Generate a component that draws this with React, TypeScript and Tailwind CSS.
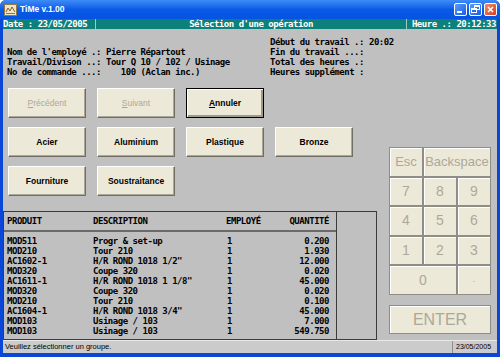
import { FC, ReactNode } from 'react'

const mono =
  "font-['DejaVu_Sans_Mono','Liberation_Mono',monospace] font-bold text-[9px] leading-[10px] tracking-[-0.47px] whitespace-pre"

const rows = [
  ['MOD511', 'Progr & set-up', '1', '0.200'],
  ['MOD210', 'Tour 210', '1', '1.930'],
  ['AC1602-1', 'H/R ROND 1018 1/2"', '1', '12.000'],
  ['MOD320', 'Coupe 320', '1', '0.020'],
  ['AC1611-1', 'H/R ROND 1018 1 1/8"', '1', '45.000'],
  ['MOD320', 'Coupe 320', '1', '0.020'],
  ['MOD210', 'Tour 210', '1', '0.100'],
  ['AC1604-1', 'H/R ROND 1018 3/4"', '1', '45.000'],
  ['MOD103', 'Usinage / 103', '1', '7.000'],
  ['MOD103', 'Usinage / 103', '1', '549.750'],
]

const Btn: FC<{ children: ReactNode; disabled?: boolean; def?: boolean }> = ({ children, disabled, def }) => {
  return (
    <div
      className={
        'w-[78px] h-[30px] bg-[#ece9d8] flex items-center justify-center font-["Liberation_Sans",Arial,sans-serif] font-bold text-[8.5px] ' +
        (def
          ? 'border border-black shadow-[inset_1px_1px_0_#ffffff,inset_-2px_-2px_0_#9d9b90] text-black'
          : 'border border-t-white border-l-white border-r-[#6f6d64] border-b-[#6f6d64] shadow-[inset_-1px_-1px_0_#aca899] ') +
        (disabled ? ' text-[#aca899] font-normal' : ' text-black')
      }
    >
      {children}
    </div>
  )
}

const Key: FC<{ children: ReactNode; className?: string }> = ({ children, className }) => {
  return (
    <div
      className={
        'flex items-center justify-center bg-[#ece9d8] border border-[#8f8d84] shadow-[inset_1px_1px_0_#ffffff] text-[#aca899] font-["Liberation_Sans",Arial,sans-serif] ' +
        (className ?? 'text-[14px]')
      }
    >
      {children}
    </div>
  )
}

export default function App() {
  return (
    <div className="w-[500px] h-[357px] bg-[#0a46d8] rounded-t-[6px] overflow-hidden flex flex-col">
      {/* Title bar */}
      <div className="h-[19px] flex items-center bg-gradient-to-b from-[#3d8cf6] via-[#0a5ae8] to-[#0553e0] pl-[4px] pr-[3px]">
        <svg width="13" height="12" viewBox="0 0 13 12" className="mr-[2px]">
          <rect x="0.5" y="0.5" width="12" height="11" fill="#efe6c6" stroke="#8c7a4a" />
          <path d="M2 8 L4 4 L6 7 L8 3 L11 8" stroke="#8a5a2a" strokeWidth="1" fill="none" />
          <rect x="2" y="9" width="9" height="1" fill="#6a8a4a" />
        </svg>
        <span className="text-white font-['Liberation_Sans',Arial,sans-serif] font-bold text-[8.5px] ml-[1px]">TiMe v.1.00</span>
        <div className="flex-1" />
        <div className="flex gap-[2px]">
          <div className="w-[13px] h-[13px] rounded-[2px] border border-white bg-gradient-to-br from-[#5a9cff] to-[#1a5ae8] flex items-end pl-[2px] pb-[2px]">
            <div className="w-[5px] h-[2px] bg-white" />
          </div>
          <div className="w-[13px] h-[13px] rounded-[2px] border border-white bg-gradient-to-br from-[#5a9cff] to-[#1a5ae8] relative">
            <div className="absolute left-[4px] top-[1px] w-[6px] h-[5px] border border-white border-t-2" />
            <div className="absolute left-[1px] top-[4px] w-[6px] h-[5px] border border-white border-t-2 bg-[#2a6af0]" />
          </div>
          <div className="w-[13px] h-[13px] rounded-[2px] border border-white bg-gradient-to-br from-[#f08a6a] to-[#d63c10] flex items-center justify-center">
            <svg width="7" height="7" viewBox="0 0 7 7">
              <path d="M1 1 L6 6 M6 1 L1 6" stroke="white" strokeWidth="1.5" />
            </svg>
          </div>
        </div>
      </div>

      <div className="mx-[3px] flex-1 flex flex-col bg-[#c0c0c0]">
        {/* Header bar */}
        <div className={'h-[10px] bg-[#0c807a] text-white flex ' + mono}>
          <div className="w-[92px]">Date : 23/05/2005</div>
          <div className="w-px bg-[#9fc9c6]" />
          <div className="flex-1 text-center">Sélection d'une opération</div>
          <div className="w-px bg-[#9fc9c6]" />
          <div className="w-[90px] text-right pr-px">Heure .: 20:12:33</div>
        </div>

        {/* Main */}
        <div className="h-[311px] flex flex-col">
          <div className={'flex pt-[8px] text-black ' + mono}>
            <div className="w-[267px] pl-[4px] mt-[10px]">
              <div>Nom de l'employé .: Pierre Répartout</div>
              <div>Travail/Divison ..: Tour Q 10 / 102 / Usinage</div>
              <div>No de commande ...:    100 (Aclan inc.)</div>
            </div>
            <div>
              <div>Début du travail .: 20:02</div>
              <div>Fin du travail ...:</div>
              <div>Total des heures .:</div>
              <div>Heures supplément :</div>
            </div>
          </div>

          <div className="flex mt-[11px]">
            <div className="w-[374px] flex flex-col">
              <div className="pl-[5px] grid grid-cols-[repeat(4,78px)] gap-x-[11px] gap-y-[9px]">
                <Btn disabled>
                  <span className="underline">P</span>récédent
                </Btn>
                <Btn disabled>
                  <span className="underline">S</span>uivant
                </Btn>
                <Btn def>
                  <span className="underline">A</span>nnuler
                </Btn>
                <div />
                <Btn>Acier</Btn>
                <Btn>Aluminium</Btn>
                <Btn>Plastique</Btn>
                <Btn>Bronze</Btn>
                <Btn>Fourniture</Btn>
                <Btn>Soustraitance</Btn>
              </div>

              {/* Table */}
              <div className="mt-[15px] h-[129px] border border-[#3c3c3c] flex">
                <div className={'w-[333px] border-r border-[#3c3c3c] text-black ' + mono}>
                  <div className="flex h-[20px] items-center border-b-2 border-[#6a6a6a]">
                    <div className="w-[89px] pl-[3px]">PRODUIT</div>
                    <div className="w-[133px]">DESCRIPTION</div>
                    <div className="w-[48px]">EMPLOYÉ</div>
                    <div className="w-[55px] text-right">QUANTITÉ</div>
                  </div>
                  <div className="pt-[4px]">
                    {rows.map((r, i) => (
                      <div key={i} className="flex h-[10px]">
                        <div className="w-[89px] pl-[3px]">{r[0]}</div>
                        <div className="w-[133px]">{r[1]}</div>
                        <div className="w-[48px] pl-[1px]">{r[2]}</div>
                        <div className="w-[55px] text-right">{r[3]}</div>
                      </div>
                    ))}
                  </div>
                </div>
              </div>
            </div>

            {/* Keypad */}
            <div className="ml-[12px] pt-[59px]">
              <div className="w-[102px] h-[148px] grid grid-cols-3 grid-rows-5">
                <Key className="text-[13px]">Esc</Key>
                <Key className="col-span-2 text-[13px]">Backspace</Key>
                <Key>7</Key>
                <Key>8</Key>
                <Key>9</Key>
                <Key>4</Key>
                <Key>5</Key>
                <Key>6</Key>
                <Key>1</Key>
                <Key>2</Key>
                <Key>3</Key>
                <Key className="col-span-2 text-[14px]">0</Key>
                <Key className="text-[9px]">.</Key>
              </div>
              <div className="mt-[10px] w-[102px] h-[29px] flex items-center justify-center bg-[#ece9d8] border border-[#8f8d84] shadow-[inset_1px_1px_0_#ffffff] text-[#aca899] text-[16px] font-['Liberation_Sans',Arial,sans-serif]">
                ENTER
              </div>
            </div>
          </div>
        </div>

        {/* Status bar */}
        <div className="h-[13px] bg-[#cbcbcb] border-t border-[#e8e8e8] flex items-center font-['Liberation_Sans',Arial,sans-serif] text-[7.5px] text-black">
          <div className="flex-1 pl-[2px]">Veuillez sélectionner un groupe.</div>
          <div className="w-px h-full bg-[#909090]" />
          <div className="w-[44px] pl-[3px] text-[7px]">23/05/2005</div>
        </div>
      </div>
      <div className="h-[4px]" />
    </div>
  )
}
